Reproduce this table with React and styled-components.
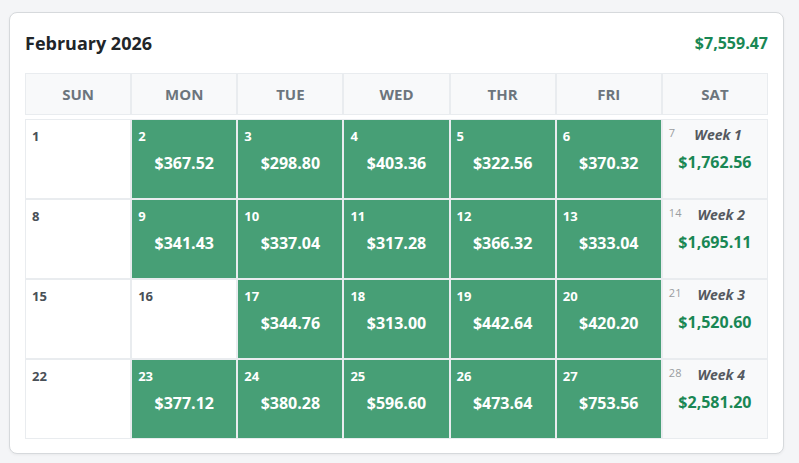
import React from "react";
import styled, { createGlobalStyle } from "styled-components";

const GlobalStyle = createGlobalStyle`
  body {
    margin: 0;
    background: #f4f5f7;
    font-family: "Open Sans", "Noto Sans", sans-serif;
  }
`;

const DAYS = ["SUN", "MON", "TUE", "WED", "THR", "FRI", "SAT"];

const weeks = [
  {
    days: [
      { n: 1 },
      { n: 2, amt: "$367.52" },
      { n: 3, amt: "$298.80" },
      { n: 4, amt: "$403.36" },
      { n: 5, amt: "$322.56" },
      { n: 6, amt: "$370.32" },
    ],
    sat: 7,
    total: "$1,762.56",
  },
  {
    days: [
      { n: 8 },
      { n: 9, amt: "$341.43" },
      { n: 10, amt: "$337.04" },
      { n: 11, amt: "$317.28" },
      { n: 12, amt: "$366.32" },
      { n: 13, amt: "$333.04" },
    ],
    sat: 14,
    total: "$1,695.11",
  },
  {
    days: [
      { n: 15 },
      { n: 16 },
      { n: 17, amt: "$344.76" },
      { n: 18, amt: "$313.00" },
      { n: 19, amt: "$442.64" },
      { n: 20, amt: "$420.20" },
    ],
    sat: 21,
    total: "$1,520.60",
  },
  {
    days: [
      { n: 22 },
      { n: 23, amt: "$377.12" },
      { n: 24, amt: "$380.28" },
      { n: 25, amt: "$596.60" },
      { n: 26, amt: "$473.64" },
      { n: 27, amt: "$753.56" },
    ],
    sat: 28,
    total: "$2,581.20",
  },
];

export default function App() {
  return (
    <>
      <GlobalStyle />
      <Page>
        <Card>
          <TitleRow>
            <Title>February 2026</Title>
            <MonthTotal>$7,559.47</MonthTotal>
          </TitleRow>
          <HeadGrid>
            {DAYS.map((d) => (
              <HeadCell key={d}>{d}</HeadCell>
            ))}
          </HeadGrid>
          <BodyGrid>
            {weeks.map((w, i) => (
              <React.Fragment key={i}>
                {w.days.map((d) => (
                  <DayCell key={d.n} $active={!!d.amt}>
                    <DayNum $active={!!d.amt}>{d.n}</DayNum>
                    {d.amt && <Amount>{d.amt}</Amount>}
                  </DayCell>
                ))}
                <WeekCell>
                  <WeekTop>
                    <SatNum>{w.sat}</SatNum>
                    <WeekLabel>Week {i + 1}</WeekLabel>
                  </WeekTop>
                  <WeekTotal>{w.total}</WeekTotal>
                </WeekCell>
              </React.Fragment>
            ))}
          </BodyGrid>
        </Card>
      </Page>
    </>
  );
}

const Page = styled.div`
  padding: 12px 0 9px 9px;
`;

const Card = styled.div`
  width: 775px;
  box-sizing: border-box;
  background: #fff;
  border: 1px solid #d6d9dc;
  border-radius: 8px;
  box-shadow: 0 1px 3px rgba(0, 0, 0, 0.05);
  padding: 18px 15px 14px 15px;
`;

const TitleRow = styled.div`
  display: flex;
  align-items: center;
  justify-content: space-between;
  margin-bottom: 18px;
`;

const Title = styled.h2`
  margin: 0;
  font-size: 18px;
  line-height: 24px;
  font-weight: 700;
  color: #212529;
`;

const MonthTotal = styled.div`
  font-size: 16px;
  font-weight: 700;
  color: #198754;
`;

const HeadGrid = styled.div`
  display: grid;
  grid-template-columns: repeat(7, 1fr);
  margin-bottom: 4px;
`;

const HeadCell = styled.div`
  height: 40px;
  display: flex;
  align-items: center;
  justify-content: center;
  background: #f8f9fa;
  border: 1px solid #e9ecef;
  font-size: 15px;
  font-weight: 700;
  color: #6c757d;
`;

const BodyGrid = styled.div`
  display: grid;
  grid-template-columns: repeat(7, 1fr);
  grid-auto-rows: 80px;
`;

const DayCell = styled.div`
  box-sizing: border-box;
  border: 1px solid #e9ecef;
  padding: 6px;
  background: ${(p) => (p.$active ? "#479f76" : "#fff")};
  display: flex;
  flex-direction: column;
`;

const DayNum = styled.div`
  font-size: 13px;
  line-height: 20px;
  font-weight: 700;
  color: ${(p) => (p.$active ? "#fff" : "#495057")};
`;

const Amount = styled.div`
  margin-top: 7px;
  text-align: center;
  font-size: 16px;
  line-height: 20px;
  font-weight: 700;
  color: #fff;
`;

const WeekCell = styled.div`
  box-sizing: border-box;
  border: 1px solid #e9ecef;
  padding: 6px;
  background: #f8f9fa;
`;

const WeekTop = styled.div`
  display: flex;
  align-items: flex-start;
`;

const SatNum = styled.span`
  font-size: 11px;
  line-height: 14px;
  color: #9a9da0;
`;

const WeekLabel = styled.span`
  flex: 1;
  text-align: center;
  font-size: 14px;
  line-height: 18px;
  font-weight: 700;
  font-style: italic;
  color: #555a60;
`;

const WeekTotal = styled.div`
  margin-top: 8px;
  text-align: center;
  font-size: 16px;
  line-height: 20px;
  font-weight: 700;
  color: #198754;
`;
